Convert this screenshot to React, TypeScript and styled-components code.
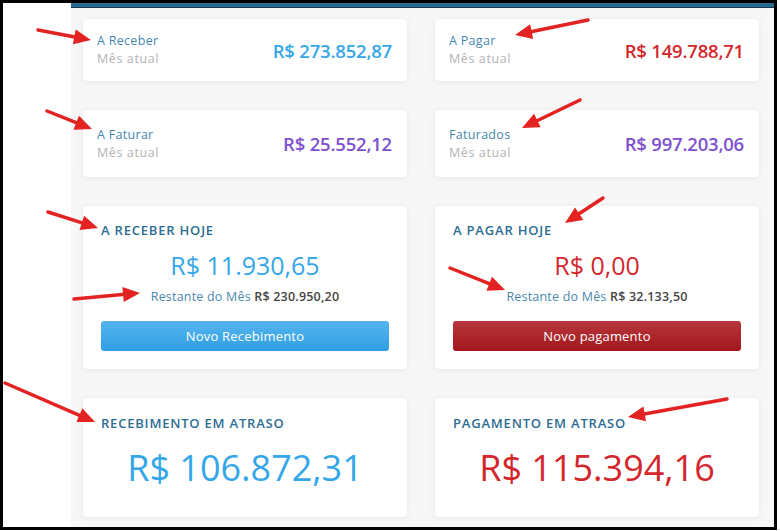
import React from "react";
import styled, { createGlobalStyle, css } from "styled-components";

type Tone = "blue" | "red" | "purple";

const tones: Record<Tone, string> = {
  blue: "#35a7e8",
  red: "#d3272d",
  purple: "#7d50cf",
};

const GlobalStyle = createGlobalStyle`
  html, body {
    margin: 0;
    padding: 0;
    background: #fff;
  }
  body {
    font-family: "Open Sans", "Noto Sans", sans-serif;
    -webkit-font-smoothing: antialiased;
  }
`;

// [x1, y1, x2, y2] : tail -> tip, page coordinates
const arrows: [number, number, number, number][] = [
  [38, 30, 91, 40],
  [588, 20, 515, 35],
  [47, 111, 92, 129],
  [580, 100, 522, 128],
  [48, 212, 98, 228],
  [74, 299, 140, 293],
  [603, 198, 565, 223],
  [450, 268, 505, 290],
  [5, 383, 95, 422],
  [727, 399, 628, 417],
];

const summary = [
  { label: "A Receber", value: "R$ 273.852,87", tone: "blue" as Tone },
  { label: "A Pagar", value: "R$ 149.788,71", tone: "red" as Tone },
  { label: "A Faturar", value: "R$ 25.552,12", tone: "purple" as Tone },
  { label: "Faturados", value: "R$ 997.203,06", tone: "purple" as Tone },
];

export default function App() {
  return (
    <>
      <GlobalStyle />
      <Frame>
        <Gutter />
        <Main>
          {summary.map((s, i) => (
            <SummaryCard key={s.label} $tall={i > 1}>
              <div>
                <Label>{s.label}</Label>
                <Sub>Mês atual</Sub>
              </div>
              <Amount $tone={s.tone}>{s.value}</Amount>
            </SummaryCard>
          ))}

          <TodayCard>
            <Heading>A Receber Hoje</Heading>
            <BigAmount $tone="blue" $size="mid">
              R$ 11.930,65
            </BigAmount>
            <Remaining>
              Restante do Mês <strong>R$ 230.950,20</strong>
            </Remaining>
            <ActionButton $variant="blue">Novo Recebimento</ActionButton>
          </TodayCard>
          <TodayCard>
            <Heading>A Pagar Hoje</Heading>
            <BigAmount $tone="red" $size="mid">
              R$ 0,00
            </BigAmount>
            <Remaining>
              Restante do Mês <strong>R$ 32.133,50</strong>
            </Remaining>
            <ActionButton $variant="red">Novo pagamento</ActionButton>
          </TodayCard>

          <LateCard>
            <Heading>Recebimento em atraso</Heading>
            <BigAmount $tone="blue" $size="large">
              R$ 106.872,31
            </BigAmount>
          </LateCard>
          <LateCard>
            <Heading>Pagamento em atraso</Heading>
            <BigAmount $tone="red" $size="large">
              R$ 115.394,16
            </BigAmount>
          </LateCard>
        </Main>
      </Frame>

      <Annotations width="780" height="531" viewBox="0 0 780 531">
        {arrows.map(([x1, y1, x2, y2], i) => {
          const dx = x2 - x1;
          const dy = y2 - y1;
          const len = Math.hypot(dx, dy);
          const ux = dx / len;
          const uy = dy / len;
          const head = 17;
          const half = 7.5;
          const bx = x2 - ux * head;
          const by = y2 - uy * head;
          const pts = [
            `${x2},${y2}`,
            `${bx - uy * half},${by + ux * half}`,
            `${bx + uy * half},${by - ux * half}`,
          ].join(" ");
          return (
            <g key={i}>
              <line
                x1={x1}
                y1={y1}
                x2={bx + ux * 2}
                y2={by + uy * 2}
                stroke="#e32222"
                strokeWidth={3.5}
                strokeLinecap="round"
              />
              <polygon points={pts} fill="#e32222" />
            </g>
          );
        })}
      </Annotations>
    </>
  );
}

const Frame = styled.div`
  position: relative;
  box-sizing: border-box;
  width: 777px;
  height: 530px;
  border: 3px solid #000;
  display: flex;
  overflow: hidden;
  background: #fff;
`;

const Gutter = styled.div`
  flex: none;
  width: 68px;
  background: #fff;
`;

const Main = styled.div`
  flex: 1;
  background: #f7f7f7;
  border-top: 4px solid #2b6a8f;
  box-shadow: inset 0 1px 0 #173a57;
  padding: 12px 0 0 12px;
  display: grid;
  grid-template-columns: 324px 324px;
  column-gap: 28px;
  row-gap: 29px;
  align-content: start;
`;

const Card = styled.div`
  background: #fff;
  border-radius: 4px;
  box-shadow: 0 1px 7px rgba(0, 0, 0, 0.07);
  box-sizing: border-box;
`;

const SummaryCard = styled(Card)<{ $tall?: boolean }>`
  height: ${({ $tall }) => ($tall ? "67px" : "62px")};
  display: flex;
  align-items: center;
  justify-content: space-between;
  padding: 0 15px 0 14px;
`;

const Label = styled.div`
  font-size: 12.5px;
  font-weight: 500;
  letter-spacing: 0.3px;
  color: #4687b0;
  line-height: 18px;
`;

const Sub = styled.div`
  font-size: 12.5px;
  letter-spacing: 0.6px;
  color: #b3b3b3;
  line-height: 18px;
`;

const Amount = styled.div<{ $tone: Tone }>`
  font-size: 18.5px;
  font-weight: 600;
  color: ${({ $tone }) => tones[$tone]};
  letter-spacing: -0.2px;
`;

const TodayCard = styled(Card)`
  display: flex;
  flex-direction: column;
  padding: 16px 18px 18px;
`;

const LateCard = styled(Card)`
  display: flex;
  flex-direction: column;
  padding: 17px 18px 27px;
`;

const Heading = styled.div`
  font-size: 13px;
  font-weight: 600;
  letter-spacing: 0.8px;
  line-height: 16px;
  text-transform: uppercase;
  color: #2c6d94;
`;

const BigAmount = styled.div<{ $tone: Tone; $size: "mid" | "large" }>`
  text-align: center;
  font-weight: 400;
  color: ${({ $tone }) => tones[$tone]};
  ${({ $size }) =>
    $size === "mid"
      ? css`
          font-size: 25px;
          line-height: 32px;
          margin-top: 11px;
        `
      : css`
          font-size: 36px;
          line-height: 44px;
          margin-top: 15px;
        `}
`;

const Remaining = styled.div`
  margin-top: 8px;
  text-align: center;
  font-size: 12.5px;
  letter-spacing: 0.2px;
  line-height: 16px;
  color: #4b88ac;

  strong {
    font-weight: 600;
    color: #444;
  }
`;

const ActionButton = styled.button<{ $variant: "blue" | "red" }>`
  margin-top: 16px;
  height: 30px;
  border: 0;
  border-radius: 3px;
  font-family: inherit;
  font-size: 13px;
  letter-spacing: 0.2px;
  color: #fff;
  cursor: pointer;
  background: ${({ $variant }) =>
    $variant === "blue"
      ? "linear-gradient(#55b5ee, #2f9fe3)"
      : "linear-gradient(#b6363c, #a3171c)"};
`;

const Annotations = styled.svg`
  position: absolute;
  top: 0;
  left: 0;
  pointer-events: none;
`;
